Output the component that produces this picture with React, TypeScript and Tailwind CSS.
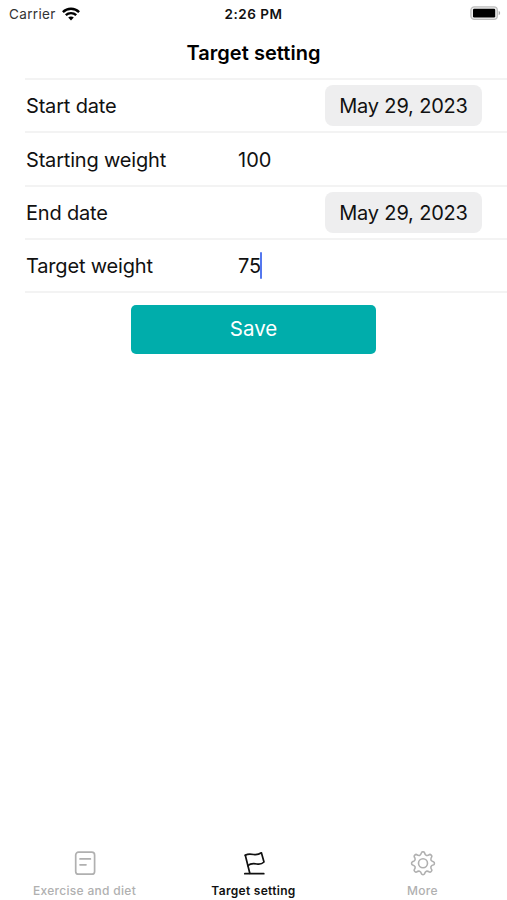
import React, { useState } from 'react';

const ExerciseIcon = () => (
  <svg className="w-[26px] h-[26px]" viewBox="0 0 26 26" fill="none" stroke="currentColor" strokeWidth="1.7" strokeLinecap="round">
    <rect x="3.7" y="2.2" width="18.9" height="22" rx="2.8" />
    <path d="M8 8.9h10.4M8 14.8h6" />
  </svg>
);

const FlagIcon = () => (
  <svg className="w-[26px] h-[26px]" viewBox="0 0 26 26" fill="none" stroke="currentColor" strokeWidth="1.7" strokeLinecap="round" strokeLinejoin="round">
    <path d="M4.3 5.2L8.8 23.3" />
    <path d="M4.3 5.2C7.3 3.4 9.8 3.9 12.6 4.5C15.6 5.1 18.2 4.3 20.4 2.8L23 12C21 14 18.6 14.6 15.8 14C12.4 13.3 9.4 13.4 6.8 15.6" />
    <path d="M3.8 23.7H22.8" />
  </svg>
);

const GearIcon = () => (
  <svg className="w-[26px] h-[26px]" viewBox="0 0 26 26" fill="none" stroke="currentColor" strokeWidth="1.6" strokeLinejoin="round">
    <circle cx="13" cy="13.3" r="4.5" />
    <path
      transform="translate(0 .3)"
      d="M11.6 2.2Q11.8 1.6 13 1.6T14.4 2.2Q15 4.7 16.4 5.1T19.6 4.2Q20.3 3.9 21.2 4.8T21.8 6.4Q20.5 8.5 20.9 9.6T23.8 11.6Q24.4 11.8 24.4 13T23.8 14.4Q21.3 15 20.9 16.4T21.8 19.6Q22.1 20.3 21.2 21.2T19.6 21.8Q17.5 20.5 16.4 20.9T14.4 23.8Q14.2 24.4 13 24.4T11.6 23.8Q11 21.3 9.6 20.9T6.4 21.8Q5.7 22.1 4.8 21.2T4.2 19.6Q5.5 17.5 5.1 16.4T2.2 14.4Q1.6 14.2 1.6 13T2.2 11.6Q4.7 11 5.1 9.6T4.2 6.4Q3.9 5.7 4.8 4.8T6.4 4.2Q8.5 5.5 9.6 5.1T11.6 2.2Z"
    />
  </svg>
);

const WifiIcon = () => (
  <svg className="w-[18px] h-[14px]" viewBox="0 0 18 14" fill="none" stroke="currentColor" strokeWidth="2.4">
    <path d="M0.9 5.1C5.4 0.6 12.6 0.6 17.1 5.1" />
    <path d="M3.8 8.2C6.7 5.4 11.3 5.4 14.2 8.2" />
    <path d="M9 13.4L6.2 10.6C7.8 9.2 10.2 9.2 11.8 10.6Z" fill="currentColor" stroke="none" />
  </svg>
);

const BatteryIcon = () => (
  <svg className="w-[31px] h-[15px]" viewBox="0 0 31 15">
    <rect x="0.9" y="0.9" width="26.4" height="12.4" rx="3.4" fill="#eeeeee" stroke="#bdbdbd" strokeWidth="1.3" />
    <rect x="3" y="2.7" width="22.2" height="8.8" rx="1.2" fill="black" />
    <path d="M28.7 5C30.6 5.6 30.6 8.6 28.7 9.2Z" fill="#a8a8a8" />
  </svg>
);

const rows = [
  { label: 'Start date', date: 'May 29, 2023', height: 'h-[53px]' },
  { label: 'Starting weight', value: '100', height: 'h-[54px]' },
  { label: 'End date', date: 'May 29, 2023', height: 'h-[53px]' },
  { label: 'Target weight', value: '75', height: 'h-[53px]', focused: true },
];

const tabs = [
  { id: 'exercise', label: 'Exercise and diet', icon: ExerciseIcon },
  { id: 'target', label: 'Target setting', icon: FlagIcon },
  { id: 'more', label: 'More', icon: GearIcon },
];

export const App: React.FC = () => {
  const [activeTab, setActiveTab] = useState('target');

  return (
    <div className="h-[900px] w-full flex flex-col bg-white text-[#111] font-['Inter',sans-serif]">
      {/* Status bar */}
      <div className="h-7 shrink-0 grid grid-cols-3 items-center px-[9px] text-[13.5px]">
        <div className="flex items-center gap-1.5 text-black">
          <span className="tracking-[0.35px] text-[#333]">Carrier</span>
          <WifiIcon />
        </div>
        <span className="text-center font-semibold tracking-[0.5px]">2:26 PM</span>
        <div className="flex justify-end -mr-[3px] -mt-0.5">
          <BatteryIcon />
        </div>
      </div>

      {/* Title */}
      <header className="h-[52px] shrink-0 flex items-center justify-center border-b-2 border-[#f3f3f3] ml-[25px] pr-[25px]">
        <h1 className="text-[20px] font-semibold tracking-[0.05px] text-black">Target setting</h1>
      </header>

      {/* Form */}
      <main className="flex-1 pl-[25px]">
        {rows.map((row) => (
          <div
            key={row.label}
            className={`${row.height} flex items-center border-b-2 border-[#f3f3f3] text-[20px] tracking-[-0.18px]`}
          >
            <span className="w-[213px] pl-px pt-px">{row.label}</span>
            {row.date ? (
              <button className="ml-auto mr-[25px] w-[157px] h-[41px] pt-px rounded-lg bg-[#eeeeef]">
                {row.date}
              </button>
            ) : (
              <span className="flex items-center">
                <span className="pt-px tracking-normal">{row.value}</span>
                {row.focused && <span className="-ml-px w-0.5 h-[27px] rounded-full bg-[#5577ee]" />}
              </span>
            )}
          </div>
        ))}

        <div className="flex justify-center mt-3 pr-[25px]">
          <button className="w-[245px] h-[49px] pb-px rounded-[5px] bg-[#00adab] text-white text-[20.5px]">
            Save
          </button>
        </div>
      </main>

      {/* Tab bar */}
      <nav className="h-[50px] shrink-0 grid grid-cols-3">
        {tabs.map((tab) => (
          <button
            key={tab.id}
            onClick={() => setActiveTab(tab.id)}
            className={`flex flex-col items-center gap-1.5 text-[12px] leading-[18px] tracking-[0.3px] ${
              activeTab === tab.id ? 'text-[#111] font-semibold' : 'text-[#b0b0b0] font-medium'
            }`}
          >
            <tab.icon />
            {tab.label}
          </button>
        ))}
      </nav>
    </div>
  );
};

export default App;
